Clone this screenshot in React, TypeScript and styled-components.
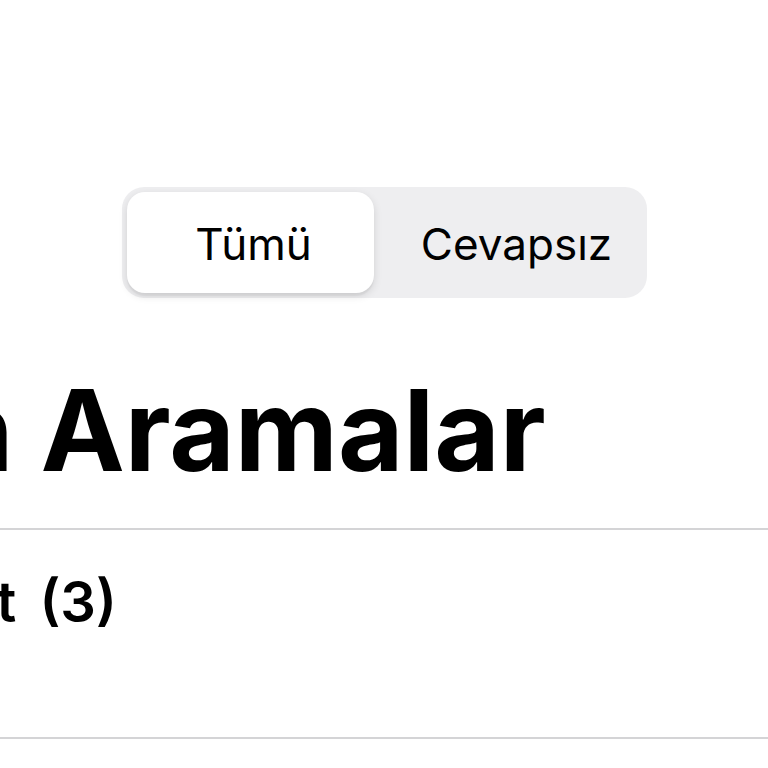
import styled, { createGlobalStyle } from "styled-components";

const GlobalStyle = createGlobalStyle`
  html, body {
    margin: 0;
    padding: 0;
    background: #ffffff;
    overflow: hidden;
  }
  body {
    font-family: Inter, "Liberation Sans", sans-serif;
    color: #000;
    -webkit-font-smoothing: antialiased;
  }
`;

const Screen = styled.div`
  width: 768px;
  height: 768px;
  overflow: hidden;
  padding-top: 187px;
  box-sizing: border-box;
`;

const NavBar = styled.div`
  display: flex;
  padding-left: 122px;
`;

const Segmented = styled.div`
  display: grid;
  grid-template-columns: 247px 1fr;
  width: 525px;
  height: 111px;
  padding: 5px;
  box-sizing: border-box;
  border-radius: 22px;
  background: #eeeef0;
`;

const Segment = styled.div<{ $active?: boolean }>`
  display: flex;
  align-items: center;
  justify-content: center;
  padding-left: ${({ $active }) => ($active ? "6px" : "17px")};
  padding-top: 2px;
  border-radius: 18px;
  font-size: 44px;
  line-height: 1;
  font-weight: 400;
  background: ${({ $active }) => ($active ? "#ffffff" : "transparent")};
  box-shadow: ${({ $active }) =>
    $active
      ? "0 3px 8px rgba(0, 0, 0, 0.12), 0 3px 1px rgba(0, 0, 0, 0.04)"
      : "none"};
`;

const Title = styled.h1`
  margin: 76px 0 41px -200px;
  font-size: 113px;
  line-height: 1;
  font-weight: 700;
  white-space: nowrap;
`;

const List = styled.div`
  border-top: 2px solid #d4d4d6;
`;

const Row = styled.div`
  height: 209px;
  box-sizing: border-box;
  padding-top: 44px;
  border-bottom: 2px solid #d4d4d6;
`;

const Name = styled.div`
  margin-left: -206px;
  font-size: 56px;
  line-height: 1;
  font-weight: 600;
  word-spacing: 9px;
  white-space: nowrap;
`;

export default function App() {
  return (
    <Screen>
      <GlobalStyle />
      <NavBar>
        <Segmented>
          <Segment $active>Tümü</Segment>
          <Segment>Cevapsız</Segment>
        </Segmented>
      </NavBar>
      <Title>Son Aramalar</Title>
      <List>
        <Row>
          <Name>Mehmet (3)</Name>
        </Row>
      </List>
    </Screen>
  );
}
